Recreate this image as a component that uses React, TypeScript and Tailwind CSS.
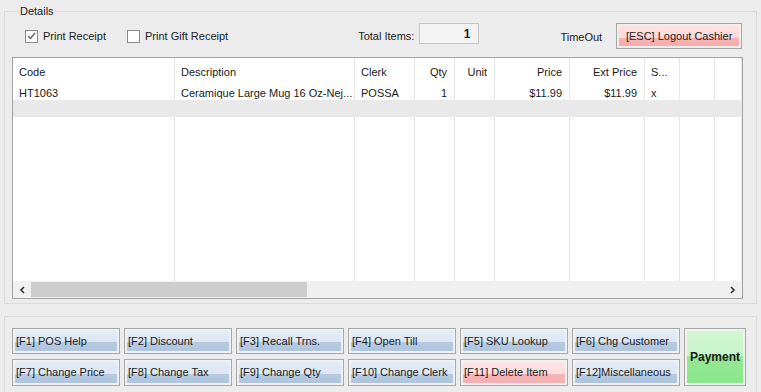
import type React from "react"

const cols = [
  { name: "Code", w: 162, align: "left" },
  { name: "Description", w: 180, align: "left" },
  { name: "Clerk", w: 60, align: "left" },
  { name: "Qty", w: 40, align: "right" },
  { name: "Unit", w: 40, align: "right" },
  { name: "Price", w: 75, align: "right" },
  { name: "Ext Price", w: 75, align: "right" },
  { name: "S...", w: 35, align: "left" },
  { name: "", w: 35, align: "left" },
  { name: "", w: 27, align: "left" },
]

const row = ["HT1063", "Ceramique Large Mug 16 Oz-Nej...", "POSSA", "1", "", "$11.99", "$11.99", "x", "", ""]

const blue = "bg-[linear-gradient(to_bottom,#e3ebf5_0%,#dde6f1_57%,#b6c9e0_57%,#b0c5de_100%)]"
const pink = "bg-[linear-gradient(to_bottom,#fde4e4_0%,#fcdcdc_57%,#f6b5b8_57%,#f4afb3_100%)]"

function FnButton({ label, tone = blue }: { label: string; tone?: string }) {
  return (
    <div className="h-full border border-[#a7a7a7] bg-[#eef1f5] p-[2px]">
      <div className={`h-full ${tone} flex items-center pl-[1px] text-[11px] text-[#1b1b1b] whitespace-nowrap overflow-hidden`}>
        {label}
      </div>
    </div>
  )
}

function Cell({ children, w, align, last }: { children?: React.ReactNode; w: number; align: string; last?: boolean }) {
  return (
    <div
      className={`h-full flex items-center border-r border-[#e6e6e6] whitespace-nowrap overflow-hidden ${align === "right" ? "justify-end pr-[7px]" : "pl-[6px]"} ${last ? "flex-1" : "shrink-0"}`}
      style={last ? undefined : { width: w }}
    >
      {children}
    </div>
  )
}

export default function App() {
  return (
    <div className="w-[761px] h-[392px] overflow-hidden bg-[#ececec] text-[11px] text-[#1b1b1b] whitespace-nowrap" style={{ fontFamily: '"Liberation Sans", Arial, sans-serif' }}>
      <fieldset className="mx-[4px] mt-[5px] h-[299px] border border-[#d9d9d9] px-[7px] pb-[3px]">
        <legend className="ml-[7px] px-[1px] leading-[13px] text-[11px]">Details</legend>

        <div className="flex items-start h-[26px] mt-[5px]">
          <label className="flex items-center shrink-0 mt-[5px] ml-[13px] gap-[5px]">
            <span className="w-[13px] h-[13px] border border-[#8a8a8a] bg-white flex items-center justify-center">
              <svg width="9" height="8" viewBox="0 0 9 8">
                <path d="M1 4 L3.5 6.5 L8 1" fill="none" stroke="#666" strokeWidth="1.4" />
              </svg>
            </span>
            <span>Print Receipt</span>
          </label>
          <label className="flex items-center shrink-0 mt-[5px] ml-[21px] gap-[5px]">
            <span className="w-[13px] h-[13px] border border-[#8a8a8a] bg-white"></span>
            <span>Print Gift Receipt</span>
          </label>
          <span className="ml-[130px] mt-[5px] shrink-0">Total Items:</span>
          <div className="ml-[5px] w-[60px] h-[21px] shrink-0 border border-[#c6c6c6] bg-[#f3f3f3] flex items-center justify-end pr-[8px] font-bold text-[12px]">
            1
          </div>
          <span className="ml-[81px] mt-[6px] shrink-0">TimeOut</span>
          <div className="ml-[14px] w-[126px] h-[26px] shrink-0 border border-[#a7a7a7] bg-[#f1eded] p-[2px]">
            <div className="h-full bg-[linear-gradient(to_bottom,#fde2e2_0%,#fbd8d8_62%,#f7b3b3_62%,#f6adad_100%)] flex items-center justify-center">
              [ESC] Logout Cashier
            </div>
          </div>
        </div>

        <div className="mt-[8px] h-[242px] w-[731px] border border-[#a3a3a3] bg-white flex flex-col">
          <div className="flex h-[26px]">
            {cols.map((c, i) => (
              <Cell key={i} w={c.w} align={c.align} last={i === cols.length - 1}>
                <span className="pt-[2px]">{c.name}</span>
              </Cell>
            ))}
          </div>
          <div className="flex h-[16px]">
            {cols.map((c, i) => (
              <Cell key={i} w={c.w} align={c.align} last={i === cols.length - 1}>
                <span className="pt-[3px]">{row[i]}</span>
              </Cell>
            ))}
          </div>
          <div className="h-[17px] bg-[#e9e9e9]"></div>
          <div className="flex flex-1">
            {cols.map((c, i) => (
              <Cell key={i} w={c.w} align={c.align} last={i === cols.length - 1} />
            ))}
          </div>
          <div className="h-[17px] bg-[#f0f0f0] flex items-center">
            <div className="w-[18px] flex justify-center">
              <svg width="6" height="8" viewBox="0 0 6 8">
                <path d="M5 1 L2 4 L5 7" fill="none" stroke="#333" strokeWidth="1.6" />
              </svg>
            </div>
            <div className="w-[276px] h-[15px] bg-[#cdcdcd]"></div>
            <div className="flex-1"></div>
            <div className="w-[18px] flex justify-center">
              <svg width="6" height="8" viewBox="0 0 6 8">
                <path d="M1 1 L4 4 L1 7" fill="none" stroke="#333" strokeWidth="1.6" />
              </svg>
            </div>
          </div>
        </div>
      </fieldset>

      <div className="mx-[4px] mt-[12px] h-[80px] border border-[#d9d9d9] pl-[7px] pt-[11px] flex gap-[4px]">
        <div className="grid grid-cols-[108px_108px_108px_108px_108px_108px] grid-rows-[26px_27px] gap-x-[4px] gap-y-[5px]">
          <FnButton label="[F1] POS Help" />
          <FnButton label="[F2] Discount" />
          <FnButton label="[F3] Recall Trns." />
          <FnButton label="[F4] Open Till" />
          <FnButton label="[F5] SKU Lookup" />
          <FnButton label="[F6] Chg Customer" />
          <FnButton label="[F7] Change Price" />
          <FnButton label="[F8] Change Tax" />
          <FnButton label="[F9] Change Qty" />
          <FnButton label="[F10] Change Clerk" />
          <FnButton label="[F11] Delete Item" tone={pink} />
          <FnButton label="[F12]Miscellaneous" />
        </div>
        <div className="w-[62px] h-[58px] border border-[#a7a7a7] bg-[#eef3ee] p-[2px]">
          <div className="h-full bg-[linear-gradient(to_bottom,#d2f6d2_0%,#c8f4c8_48%,#93e893_48%,#8ce68c_100%)] flex items-center justify-center font-bold text-[12px]">
            Payment
          </div>
        </div>
      </div>
    </div>
  )
}
